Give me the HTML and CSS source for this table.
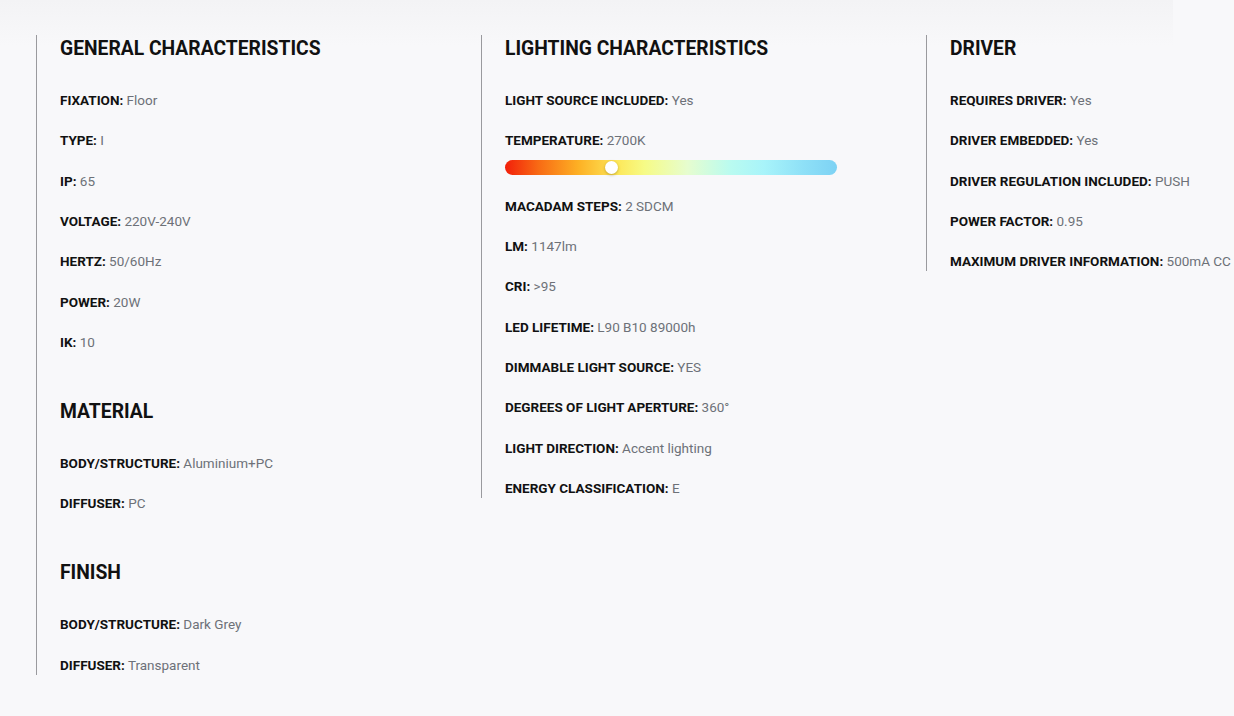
FILE: index.html
```html
<!DOCTYPE html>
<html lang="en">
<head>
<meta charset="utf-8">
<title>Specifications</title>
<link rel="stylesheet" href="styles.css">
</head>
<body>
<div class="top-shade"></div>
<main class="specs">
  <section class="col">
    <h2 class="heading">GENERAL CHARACTERISTICS</h2>
    <ul class="list">
      <li class="item"><b>FIXATION:</b> <span>Floor</span></li>
      <li class="item"><b>TYPE:</b> <span>I</span></li>
      <li class="item"><b>IP:</b> <span>65</span></li>
      <li class="item"><b>VOLTAGE:</b> <span>220V-240V</span></li>
      <li class="item"><b>HERTZ:</b> <span>50/60Hz</span></li>
      <li class="item"><b>POWER:</b> <span>20W</span></li>
      <li class="item"><b>IK:</b> <span>10</span></li>
    </ul>
    <h2 class="heading heading-next">MATERIAL</h2>
    <ul class="list">
      <li class="item"><b>BODY/STRUCTURE:</b> <span>Aluminium+PC</span></li>
      <li class="item"><b>DIFFUSER:</b> <span>PC</span></li>
    </ul>
    <h2 class="heading heading-next">FINISH</h2>
    <ul class="list">
      <li class="item"><b>BODY/STRUCTURE:</b> <span>Dark Grey</span></li>
      <li class="item"><b>DIFFUSER:</b> <span>Transparent</span></li>
    </ul>
  </section>
  <section class="col">
    <h2 class="heading">LIGHTING CHARACTERISTICS</h2>
    <ul class="list">
      <li class="item"><b>LIGHT SOURCE INCLUDED:</b> <span>Yes</span></li>
      <li class="item"><b>TEMPERATURE:</b> <span>2700K</span>
        <div class="temp-bar"><div class="temp-knob" style="left: 32%"></div></div>
      </li>
      <li class="item"><b>MACADAM STEPS:</b> <span>2 SDCM</span></li>
      <li class="item"><b>LM:</b> <span>1147lm</span></li>
      <li class="item"><b>CRI:</b> <span>&gt;95</span></li>
      <li class="item"><b>LED LIFETIME:</b> <span>L90 B10 89000h</span></li>
      <li class="item"><b>DIMMABLE LIGHT SOURCE:</b> <span>YES</span></li>
      <li class="item"><b>DEGREES OF LIGHT APERTURE:</b> <span>360°</span></li>
      <li class="item"><b>LIGHT DIRECTION:</b> <span>Accent lighting</span></li>
      <li class="item"><b>ENERGY CLASSIFICATION:</b> <span>E</span></li>
    </ul>
  </section>
  <section class="col">
    <h2 class="heading">DRIVER</h2>
    <ul class="list">
      <li class="item"><b>REQUIRES DRIVER:</b> <span>Yes</span></li>
      <li class="item"><b>DRIVER EMBEDDED:</b> <span>Yes</span></li>
      <li class="item"><b>DRIVER REGULATION INCLUDED:</b> <span>PUSH</span></li>
      <li class="item"><b>POWER FACTOR:</b> <span>0.95</span></li>
      <li class="item"><b>MAXIMUM DRIVER INFORMATION:</b> <span>500mA CC</span></li>
    </ul>
  </section>
</main>
</body>
</html>
```
FILE: styles.css
```css
html, body {
  margin: 0;
  padding: 0;
  overflow: hidden;
  background: #f8f8fa;
  font-family: Roboto, "Liberation Sans", Arial, sans-serif;
  color: #111111;
}

body {
  width: 1234px;
  height: 716px;
  position: relative;
}

.top-shade {
  position: absolute;
  left: 0;
  top: 0;
  width: 1173px;
  height: 46px;
  background: linear-gradient(to bottom, #f3f3f5 0%, #f6f6f8 60%, rgba(248, 248, 250, 0) 100%);
  pointer-events: none;
}

.specs {
  position: relative;
  display: grid;
  grid-template-columns: 445px 445px 445px;
  align-items: start;
  padding: 35px 0 0 36px;
  width: max-content;
}

.col {
  border-left: 1px solid #9a9a9e;
  padding: 1px 0 0 23px;
}

.heading {
  margin: 0 0 28px 0;
  font-size: 19.3px;
  line-height: 26px;
  font-weight: 700;
  color: #111111;
}

.heading-next {
  margin-top: 47px;
}

.list {
  list-style: none;
  margin: 0;
  padding: 0;
}

.item {
  font-size: 13.5px;
  line-height: 20px;
  margin-bottom: 20.33px;
  white-space: nowrap;
}

.item:last-child {
  margin-bottom: 0;
}

.item b {
  font-weight: 700;
  color: #111111;
}

.item span {
  color: #6d7178;
}

.temp-bar {
  position: relative;
  width: 332px;
  height: 15px;
  margin: 10px 0 3px 0;
  border-radius: 8px;
  background: linear-gradient(to right,
    #f21f0a 0%,
    #f86a14 10%,
    #fdb024 22%,
    #fde85a 34%,
    #f6fb86 42%,
    #e6fdcf 55%,
    #b9fbf0 68%,
    #a8f4fa 78%,
    #8ee0f7 90%,
    #7dd2f4 100%);
}

.temp-knob {
  position: absolute;
  top: 1px;
  width: 13px;
  height: 13px;
  margin-left: -6px;
  border-radius: 50%;
  background: #ffffff;
  box-shadow: 0 1px 3px rgba(120, 90, 0, 0.45);
}
```
